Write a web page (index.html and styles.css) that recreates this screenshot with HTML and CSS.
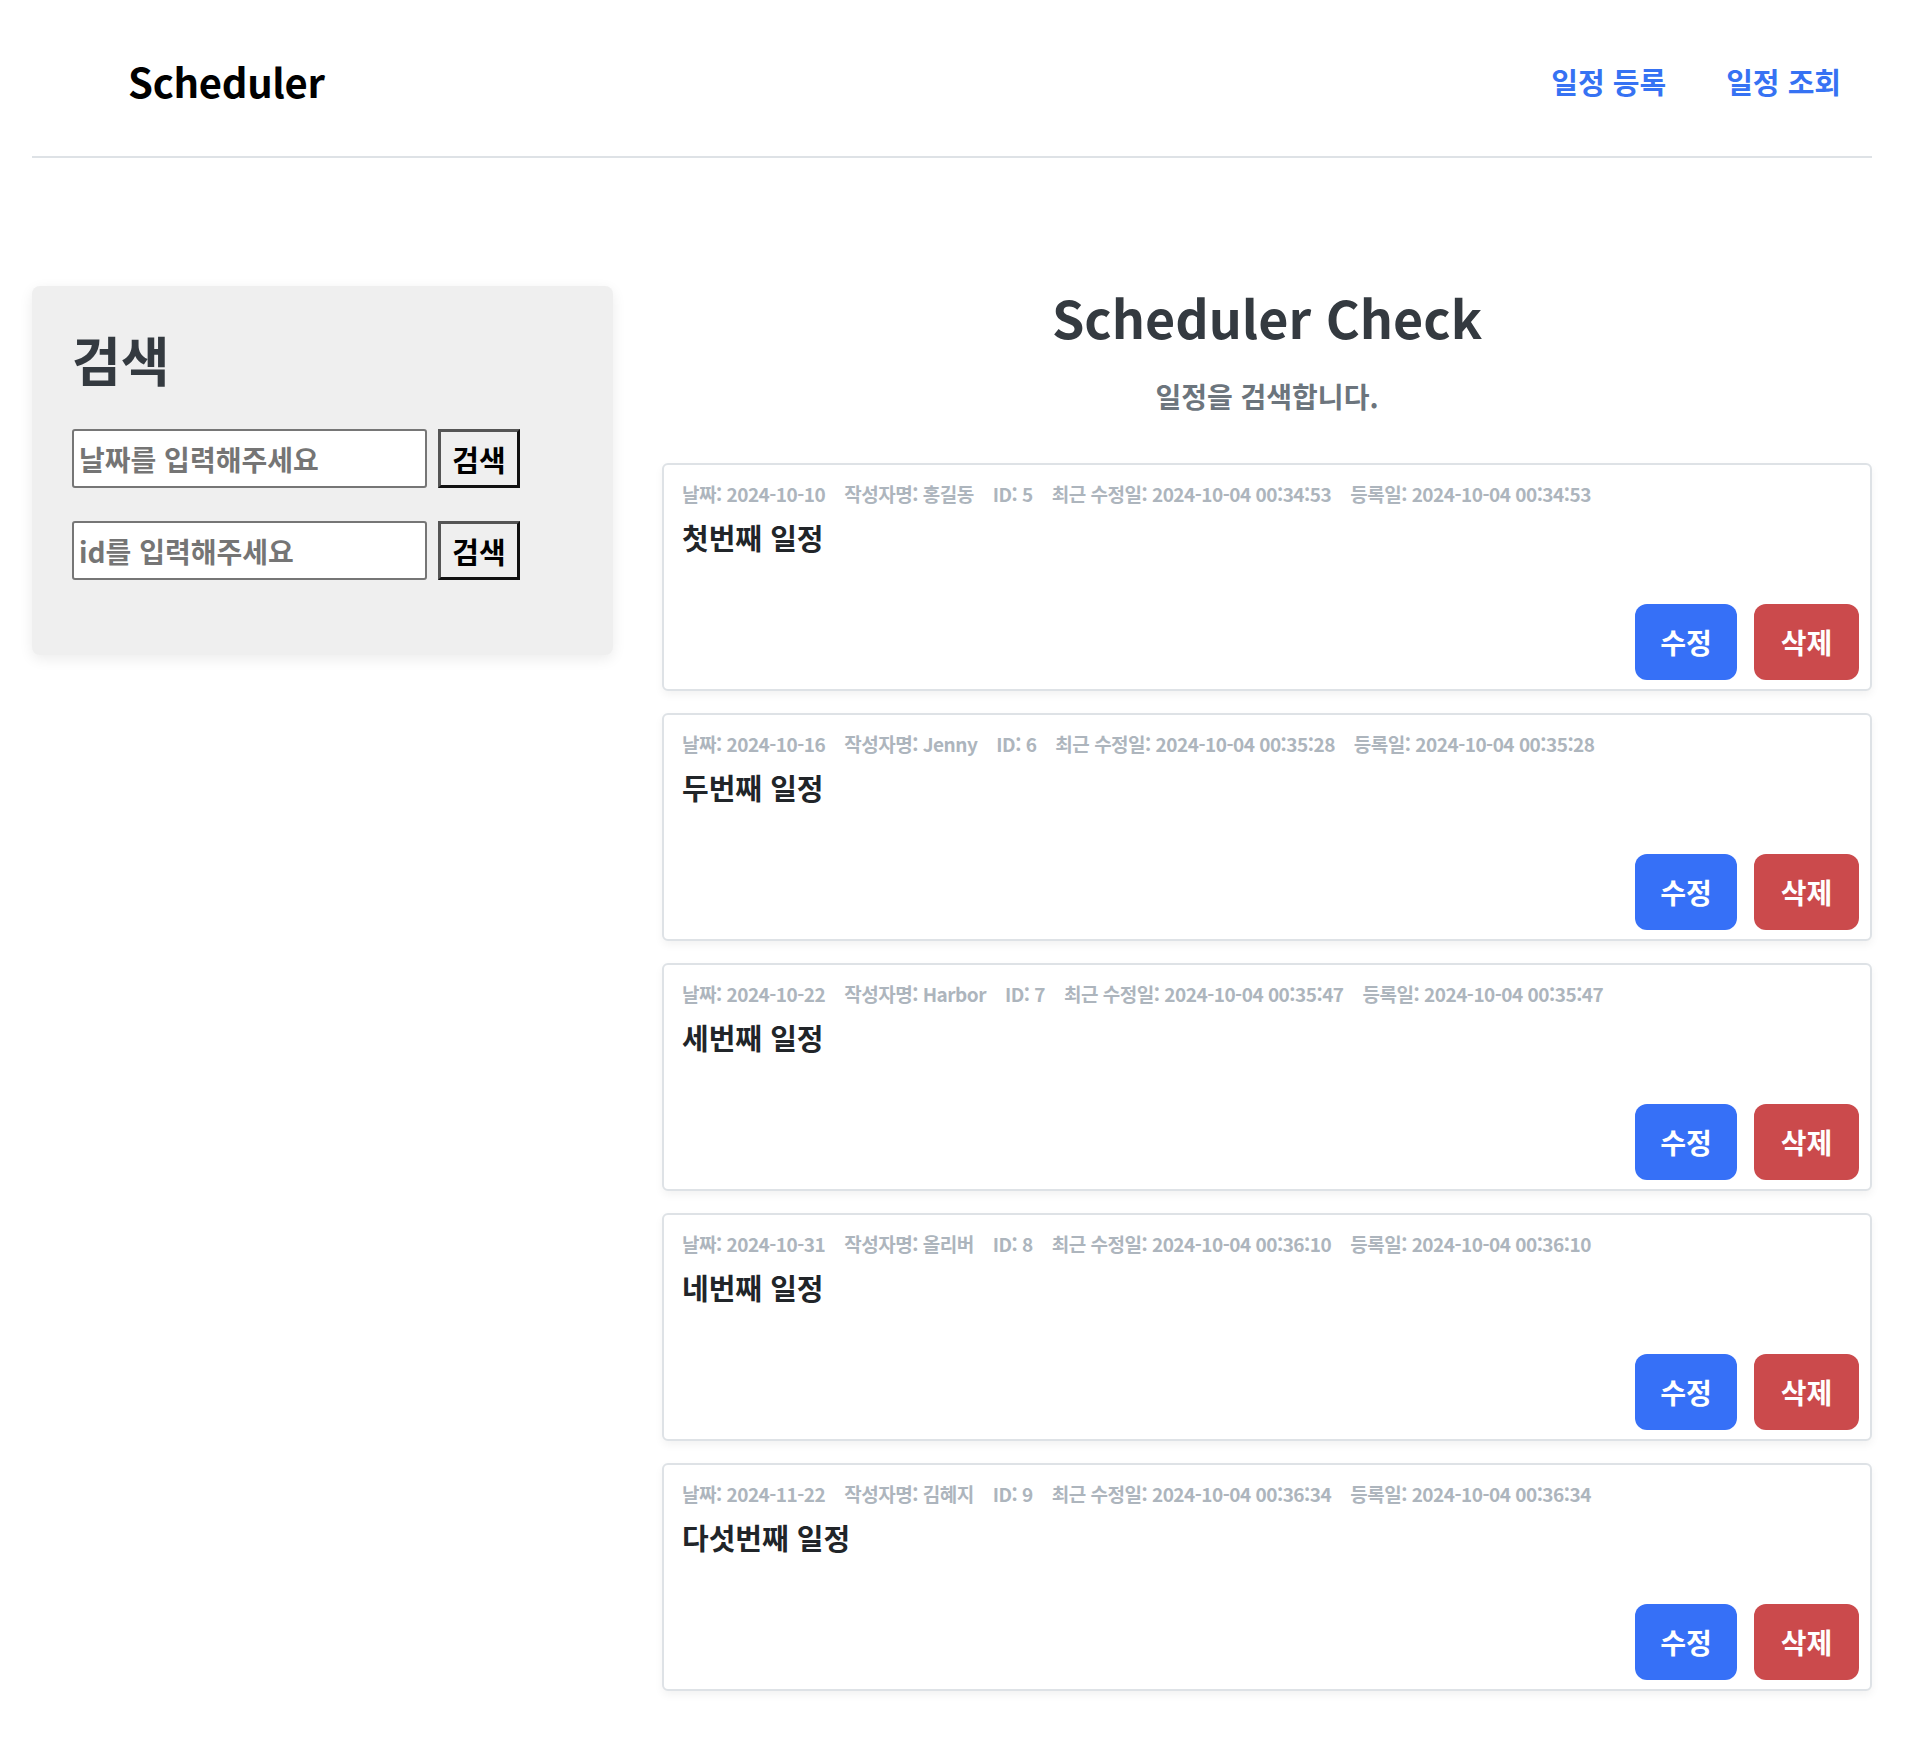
FILE: index.html
```html
<!DOCTYPE html>
<html lang="ko">
<head>
<meta charset="utf-8">
<title>Scheduler</title>
<link rel="stylesheet" href="styles.css">
</head>
<body>
<div class="page">
  <header class="topbar">
    <a class="brand" href="#">Scheduler</a>
    <nav class="nav">
      <a href="#">일정 등록</a>
      <a href="#">일정 조회</a>
    </nav>
  </header>

  <div class="layout">
    <aside class="search-panel">
      <h2 class="search-title">검색</h2>
      <form class="search-row">
        <input class="search-input" type="text" placeholder="날짜를 입력해주세요">
        <button class="search-btn" type="button">검색</button>
      </form>
      <form class="search-row">
        <input class="search-input" type="text" placeholder="id를 입력해주세요">
        <button class="search-btn" type="button">검색</button>
      </form>
    </aside>

    <main class="content">
      <h1 class="page-title">Scheduler Check</h1>
      <p class="page-sub">일정을 검색합니다.</p>

      <div class="list">
        <article class="card">
          <div class="meta">
            <span>날짜: 2024-10-10</span>
            <span>작성자명: 홍길동</span>
            <span>ID: 5</span>
            <span>최근 수정일: 2024-10-04 00:34:53</span>
            <span>등록일: 2024-10-04 00:34:53</span>
          </div>
          <h3 class="card-title">첫번째 일정</h3>
          <div class="actions">
            <button class="btn btn-edit" type="button">수정</button>
            <button class="btn btn-del" type="button">삭제</button>
          </div>
        </article>

        <article class="card">
          <div class="meta">
            <span>날짜: 2024-10-16</span>
            <span>작성자명: Jenny</span>
            <span>ID: 6</span>
            <span>최근 수정일: 2024-10-04 00:35:28</span>
            <span>등록일: 2024-10-04 00:35:28</span>
          </div>
          <h3 class="card-title">두번째 일정</h3>
          <div class="actions">
            <button class="btn btn-edit" type="button">수정</button>
            <button class="btn btn-del" type="button">삭제</button>
          </div>
        </article>

        <article class="card">
          <div class="meta">
            <span>날짜: 2024-10-22</span>
            <span>작성자명: Harbor</span>
            <span>ID: 7</span>
            <span>최근 수정일: 2024-10-04 00:35:47</span>
            <span>등록일: 2024-10-04 00:35:47</span>
          </div>
          <h3 class="card-title">세번째 일정</h3>
          <div class="actions">
            <button class="btn btn-edit" type="button">수정</button>
            <button class="btn btn-del" type="button">삭제</button>
          </div>
        </article>

        <article class="card">
          <div class="meta">
            <span>날짜: 2024-10-31</span>
            <span>작성자명: 올리버</span>
            <span>ID: 8</span>
            <span>최근 수정일: 2024-10-04 00:36:10</span>
            <span>등록일: 2024-10-04 00:36:10</span>
          </div>
          <h3 class="card-title">네번째 일정</h3>
          <div class="actions">
            <button class="btn btn-edit" type="button">수정</button>
            <button class="btn btn-del" type="button">삭제</button>
          </div>
        </article>

        <article class="card">
          <div class="meta">
            <span>날짜: 2024-11-22</span>
            <span>작성자명: 김혜지</span>
            <span>ID: 9</span>
            <span>최근 수정일: 2024-10-04 00:36:34</span>
            <span>등록일: 2024-10-04 00:36:34</span>
          </div>
          <h3 class="card-title">다섯번째 일정</h3>
          <div class="actions">
            <button class="btn btn-edit" type="button">수정</button>
            <button class="btn btn-del" type="button">삭제</button>
          </div>
        </article>
      </div>
    </main>
  </div>
</div>
</body>
</html>
```

FILE: styles.css
```css
* {
  box-sizing: border-box;
}

html, body {
  margin: 0;
  padding: 0;
  background: #ffffff;
}

body {
  font-family: "Noto Sans CJK KR", "Noto Sans", sans-serif;
  font-weight: 700;
  color: #212529;
}

.page {
  padding: 0 42px 0 32px;
}

/* ---------- header ---------- */
.topbar {
  height: 158px;
  padding-top: 6px;
  border-bottom: 2px solid #dee2e6;
  display: flex;
  align-items: center;
  justify-content: space-between;
}

.brand {
  margin-left: 96px;
  font-size: 40px;
  line-height: 52px;
  font-weight: 700;
  color: #000;
  text-decoration: none;
  letter-spacing: -0.3px;
}

.nav {
  display: flex;
  gap: 60px;
  margin-right: 31px;
}

.nav a {
  font-size: 29px;
  line-height: 36px;
  color: #3672f3;
  text-decoration: none;
}

/* ---------- layout ---------- */
.layout {
  display: grid;
  grid-template-columns: 581px 1fr;
  column-gap: 49px;
  align-items: start;
  margin-top: 128px;
  padding-bottom: 40px;
}

/* ---------- search panel ---------- */
.search-panel {
  background: #efefef;
  border-radius: 8px;
  box-shadow: 0 4px 14px rgba(0, 0, 0, 0.08);
  padding: 44px 40px 75px;
}

.search-title {
  margin: 0 0 41px;
  font-size: 53px;
  line-height: 58px;
  color: #343a40;
}

.search-row {
  display: flex;
  gap: 11px;
  margin: 0;
}

.search-row + .search-row {
  margin-top: 33px;
}

.search-input {
  width: 355px;
  height: 59px;
  border: 2px solid #767676;
  border-radius: 3px;
  background: #fff;
  padding: 0 5px;
  font-family: inherit;
  font-weight: 700;
  font-size: 28px;
  color: #333;
}

.search-input::placeholder {
  color: #757575;
}

.search-btn {
  width: 82px;
  height: 59px;
  padding: 0;
  background: #efefef;
  border-style: solid;
  border-width: 3px;
  border-color: #555 #111 #111 #555;
  font-family: inherit;
  font-weight: 700;
  font-size: 29px;
  color: #000;
}

/* ---------- content ---------- */
.content {
  display: flex;
  flex-direction: column;
}

.page-title {
  margin: 0;
  text-align: center;
  font-size: 52px;
  line-height: 62px;
  color: #343a40;
}

.page-sub {
  margin: 29px 0 47px;
  text-align: center;
  font-size: 28px;
  line-height: 39px;
  color: #6c757d;
}

.list {
  display: flex;
  flex-direction: column;
  gap: 22px;
}

.card {
  height: 228px;
  border: 2px solid #dee2e6;
  border-radius: 6px;
  background: #fff;
  box-shadow: 0 4px 8px rgba(0, 0, 0, 0.05);
  padding: 17px 11px 9px 18px;
  display: flex;
  flex-direction: column;
}

.meta {
  display: flex;
  gap: 19px;
  font-size: 19px;
  line-height: 24px;
  color: #adb5bd;
  letter-spacing: -0.5px;
}

.card-title {
  margin: 13px 0 0;
  font-size: 29px;
  line-height: 36px;
  color: #212529;
}

.actions {
  margin-top: auto;
  display: flex;
  justify-content: flex-end;
  gap: 17px;
}

.btn {
  height: 76px;
  border: none;
  border-radius: 12px;
  font-family: inherit;
  font-weight: 700;
  font-size: 28px;
  color: #fff;
  padding: 0;
}

.btn-edit {
  width: 102px;
  background: #3670f7;
}

.btn-del {
  width: 105px;
  background: #cb4a4c;
}
```
